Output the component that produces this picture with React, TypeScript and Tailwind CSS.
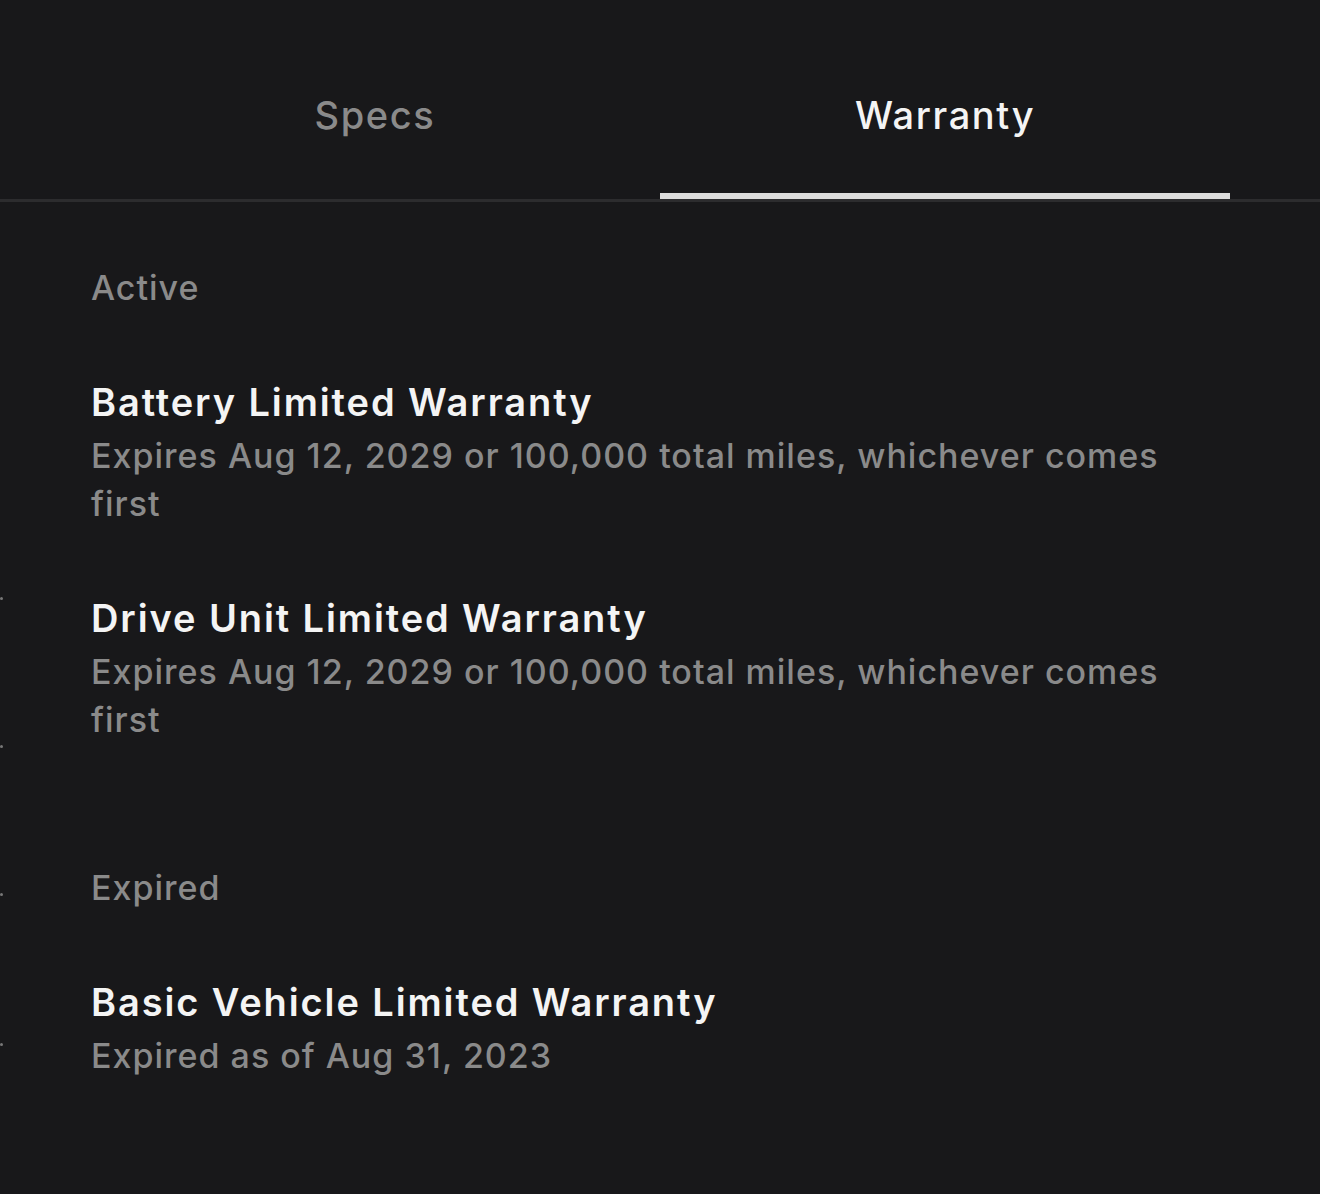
const sections = [
  {
    label: "Active",
    items: [
      {
        title: "Battery Limited Warranty",
        detail: "Expires Aug 12, 2029 or 100,000 total miles, whichever comes first",
      },
      {
        title: "Drive Unit Limited Warranty",
        detail: "Expires Aug 12, 2029 or 100,000 total miles, whichever comes first",
      },
    ],
  },
  {
    label: "Expired",
    items: [
      {
        title: "Basic Vehicle Limited Warranty",
        detail: "Expired as of Aug 31, 2023",
      },
    ],
  },
];

function Tab({ label, active }: { label: string; active?: boolean }) {
  return (
    <div className="flex h-[199px] flex-1 flex-col items-center">
      <div
        className={`pt-[91px] text-[38px] font-medium leading-[48px] tracking-[1.6px] ${
          active ? "text-[#f4f4f4]" : "text-[#8a8a8a]"
        }`}
      >
        {label}
      </div>
      <div className="flex-1" />
      <div className={`h-[6px] w-full ${active ? "bg-[#dcdcdc]" : ""}`} />
    </div>
  );
}

export default function App() {
  return (
    <div
      className="relative min-h-[1194px] w-full bg-[#18181a]"
      style={{ fontFamily: "Inter, 'Noto Sans', sans-serif" }}
    >
      <div className="border-b-[3px] border-[#2c2c2e]">
        <div className="flex px-[90px]">
          <Tab label="Specs" />
          <Tab label="Warranty" active />
        </div>
      </div>

      <div className="pl-[91px] pr-[120px] pt-[62px]">
        {sections.map((s, si) => (
          <section key={s.label} className={si > 0 ? "mt-[120px]" : ""}>
            <h2 className="text-[34px] font-medium leading-[48px] tracking-[1px] text-[#8a8a8a]">
              {s.label}
            </h2>
            <div className="mt-[60px] flex flex-col gap-[60px]">
              {s.items.map((it) => (
                <div key={it.title}>
                  <div className="text-[38px] font-semibold leading-[60px] tracking-[1.9px] text-[#f4f4f4]">
                    {it.title}
                  </div>
                  <div className="text-[34px] font-medium leading-[48px] tracking-[1px] text-[#8a8a8a]">
                    {it.detail}
                  </div>
                </div>
              ))}
            </div>
          </section>
        ))}
      </div>

      {[597, 745, 893, 1043].map((y) => (
        <span
          key={y}
          className="absolute left-0 h-[3px] w-[3px] rounded-full bg-[#777]"
          style={{ top: y }}
        />
      ))}
    </div>
  );
}
